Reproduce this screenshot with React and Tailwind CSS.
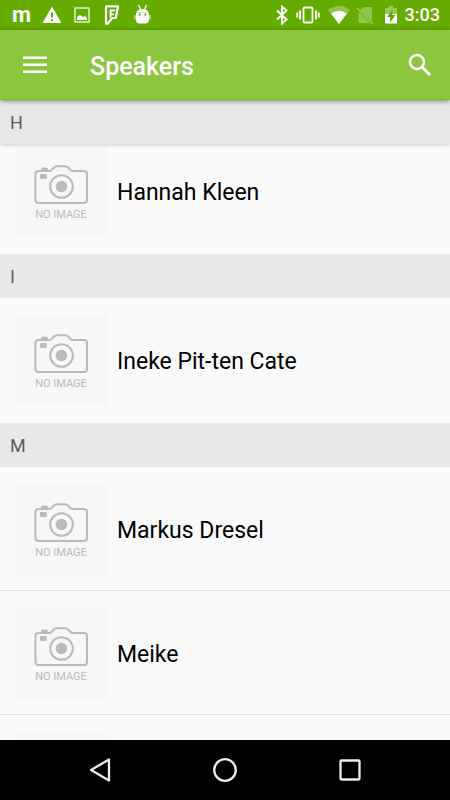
const sections = [
	{ letter: 'H', speakers: ['Hannah Kleen'] },
	{ letter: 'I', speakers: ['Ineke Pit-ten Cate'] },
	{ letter: 'M', speakers: ['Markus Dresel', 'Meike', ''] },
]

const StatusBar = () => {
	return (
		<div className="flex h-[30px] shrink-0 items-center justify-between bg-[#64ad00] pr-[10px] pl-3 text-white">
			<div className="flex items-center gap-[10px]">
				<span className="text-[22px] leading-7 font-bold">m</span>
				<svg className="h-5 w-5" viewBox="0 0 20 20" fill="currentColor">
					<path fillRule="evenodd" d="M11 1.500 20.500 18H1.500ZM10 7.500h2v5h-2Zm0 6.500h2v2h-2Z" />
				</svg>
				<svg className="h-5 w-5" viewBox="0 0 20 20">
					<rect x="4" y="3" width="14" height="14" fill="none" stroke="currentColor" strokeWidth="1.2" />
					<path d="M6 15v-3l3-2 3 2 2-1 2 2v2Z" fill="currentColor" />
				</svg>
				<svg className="h-5 w-5 overflow-visible" viewBox="0 0 20 20" fill="none" stroke="currentColor" strokeLinejoin="round">
					<path d="M5 1.300h12l-2.200 11.700h-3.600L6.500 18.700H5Z" strokeWidth="2.200" />
					<path d="M14 5.500H9.500v7M9.500 9.300H13" strokeWidth="1.800" />
				</svg>
				<svg className="h-5 w-5 overflow-visible" viewBox="0 0 20 20">
					<path d="M5 9.500q0-5.500 6.500-5.500t6.500 5.500v5q0 4-4 4H9q-4 0-4-4Z" fill="currentColor" />
					<path d="m7.500 0 2 4.500M15.500 0l-2 4.500" stroke="currentColor" strokeWidth="1.200" />
					<path d="M4 10v4.500M19 10v4.500" stroke="currentColor" strokeWidth="1.500" strokeOpacity=".6" />
					<path d="M5 7.500h13" stroke="#64ad00" strokeOpacity=".25" />
					<circle cx="8.700" cy="9.700" r="1.100" fill="#64ad00" />
					<circle cx="14.300" cy="9.700" r="1.100" fill="#64ad00" />
				</svg>
			</div>
			<div className="flex items-center">
				<svg className="h-5 w-5" viewBox="0 0 20 20" fill="none" stroke="currentColor" strokeWidth="1.900">
					<path d="m5 5.500 9.500 9-4.500 4v-17l4.500 4-9.500 9" />
				</svg>
				<svg className="ml-1 h-6 w-6" viewBox="0 0 24 24" fill="none" stroke="currentColor" strokeWidth="1.800">
					<rect x="7.500" y="4.500" width="9" height="15" rx="1" />
					<path d="M4 7.500v9M1.200 9.500v5M20 7.500v9M22.800 9.500v5" />
				</svg>
				<svg className="ml-2 h-[22px] w-[22px]" viewBox="0 0 22 22" fill="currentColor">
					<path d="M11 20 0 6Q11-2 22 6Z" opacity=".3" />
					<path d="M11 20 3 9.500q8-5.500 16 0Z" />
				</svg>
				<svg className="ml-[5px] h-5 w-5" viewBox="0 0 20 20">
					<path d="M8.500 2H17v14.500L5.500 5ZM3.500 6.500 15 18H3.500Z" fill="currentColor" opacity=".3" />
					<path d="m2 3 16 16" stroke="currentColor" strokeWidth="1.300" opacity=".4" />
				</svg>
				<svg className="ml-[6px] h-5 w-5" viewBox="0 0 20 20" fill="currentColor">
					<path d="M4 3h3.500V1h5v2H16v6H4Z" opacity=".35" />
					<path d="M4 9h12v9.500H4Z" />
					<path d="M11.500 4.500 6 12h3v5.500l5.500-7.500h-3Z" fill="#64ad00" />
				</svg>
				<span className="ml-1 text-lg leading-6 font-medium">3:03</span>
			</div>
		</div>
	)
}

const TopHeader = () => {
	return (
		<header className="relative z-20 flex h-[70px] shrink-0 items-center border-b border-[#80c01f] bg-[#8cc63f] px-5 text-white shadow-[0_1px_5px_rgba(0,0,0,0.45)]">
			<button type="button" aria-label="Menu" className="flex h-[30px] w-[30px] items-center justify-center">
				<svg className="h-[30px] w-[30px]" viewBox="0 0 30 30" fill="currentColor">
					<path d="M3 6.500h24V9H3ZM3 13.500h24V16H3ZM3 20.500h24V23H3Z" />
				</svg>
			</button>
			<h1 className="ml-10 flex-1 pt-1 text-[25px] leading-8 font-medium">Speakers</h1>
			<button type="button" aria-label="Search" className="-mr-1 flex h-[30px] w-[30px] items-center justify-center">
				<svg className="h-[30px] w-[30px]" viewBox="0 0 30 30" fill="none" stroke="currentColor" strokeWidth="2.500">
					<circle cx="13" cy="12" r="7" />
					<path d="m18 17 8 8" strokeWidth="3" />
				</svg>
			</button>
		</header>
	)
}

const NoImage = ({ label }) => {
	return (
		<div className="flex h-[92px] w-[92px] shrink-0 flex-col items-center bg-[#f7f7f7] text-[#b9babb]">
			<svg className="mt-[18px] h-[43px] w-14" viewBox="18 18 56 43" fill="none" stroke="currentColor" strokeWidth="2">
				<path d="M23.500 26h11q1.500 0 2.500-1.500l2-2q1-1.200 2.500-1.200h9q1.500 0 2.500 1.200l2 2q1 1.500 2.500 1.500h11.500q3 0 3 3v26q0 3-3 3h-45.500q-3 0-3-3V29q0-3 3-3Z" />
				<circle cx="46.500" cy="41.500" r="11.300" />
				<circle cx="46.500" cy="41.500" r="5.800" fill="currentColor" stroke="none" />
				<rect x="25" y="29" width="6.700" height="5" rx="1" fill="currentColor" stroke="none" />
				<path d="M26 25.500q0-3 2-3h3q2 0 2 3Z" fill="currentColor" stroke="none" />
			</svg>
			{label && <span className="mt-px text-[11px] leading-4 whitespace-nowrap">{label}</span>}
		</div>
	)
}

const SpeakerList = () => {
	return (
		<main className="min-h-0 flex-1 overflow-hidden">
			{sections.map((section, index) => (
				<section key={section.letter} className="pb-px">
					<h2
						className={`relative z-10 flex h-11 items-center bg-[#e8e8e8] px-[10px] pt-[2px] text-lg text-[#5c5c60] ${
							index === 0 ? 'shadow-[0_1px_4px_rgba(0,0,0,0.18)]' : ''
						}`}
					>
						{section.letter}
					</h2>
					{/* the first group is scrolled a little under its pinned header */}
					<ul className={index === 0 ? '-mt-[15px]' : ''}>
						{section.speakers.map((name, i) => (
							<li
								key={i}
								className="flex h-[124px] items-center gap-[10px] border-b border-[#dedede] px-[15px] pt-px last:border-transparent"
							>
								<NoImage label={name && 'NO IMAGE'} />
								<span className="pt-1 text-[23px] leading-8 text-black">{name}</span>
							</li>
						))}
					</ul>
				</section>
			))}
		</main>
	)
}

const NavigationBar = () => {
	return (
		<nav className="flex h-[60px] shrink-0 items-center justify-center bg-black text-[#ececec]">
			<button type="button" aria-label="Back" className="flex w-[125px] justify-center">
				<svg className="h-[30px] w-[30px]" viewBox="0 0 30 30" fill="none" stroke="currentColor" strokeWidth="2.300" strokeLinejoin="round">
					<path d="M24 4.500v21L6 15Z" />
				</svg>
			</button>
			<button type="button" aria-label="Home" className="flex w-[125px] justify-center">
				<svg className="h-[30px] w-[30px]" viewBox="0 0 30 30" fill="none" stroke="currentColor" strokeWidth="2.300">
					<circle cx="15" cy="15" r="10.800" />
				</svg>
			</button>
			<button type="button" aria-label="Recent apps" className="flex w-[125px] justify-center">
				<svg className="h-[30px] w-[30px]" viewBox="0 0 30 30" fill="none" stroke="currentColor" strokeWidth="2.300">
					<rect x="5.500" y="5.500" width="19" height="19" rx="1" />
				</svg>
			</button>
		</nav>
	)
}

const App = () => {
	return (
		<div className="flex h-screen flex-col bg-[#fafafa] font-[Roboto,sans-serif]">
			<StatusBar />
			<TopHeader />
			<SpeakerList />
			<NavigationBar />
		</div>
	)
}

export default App
